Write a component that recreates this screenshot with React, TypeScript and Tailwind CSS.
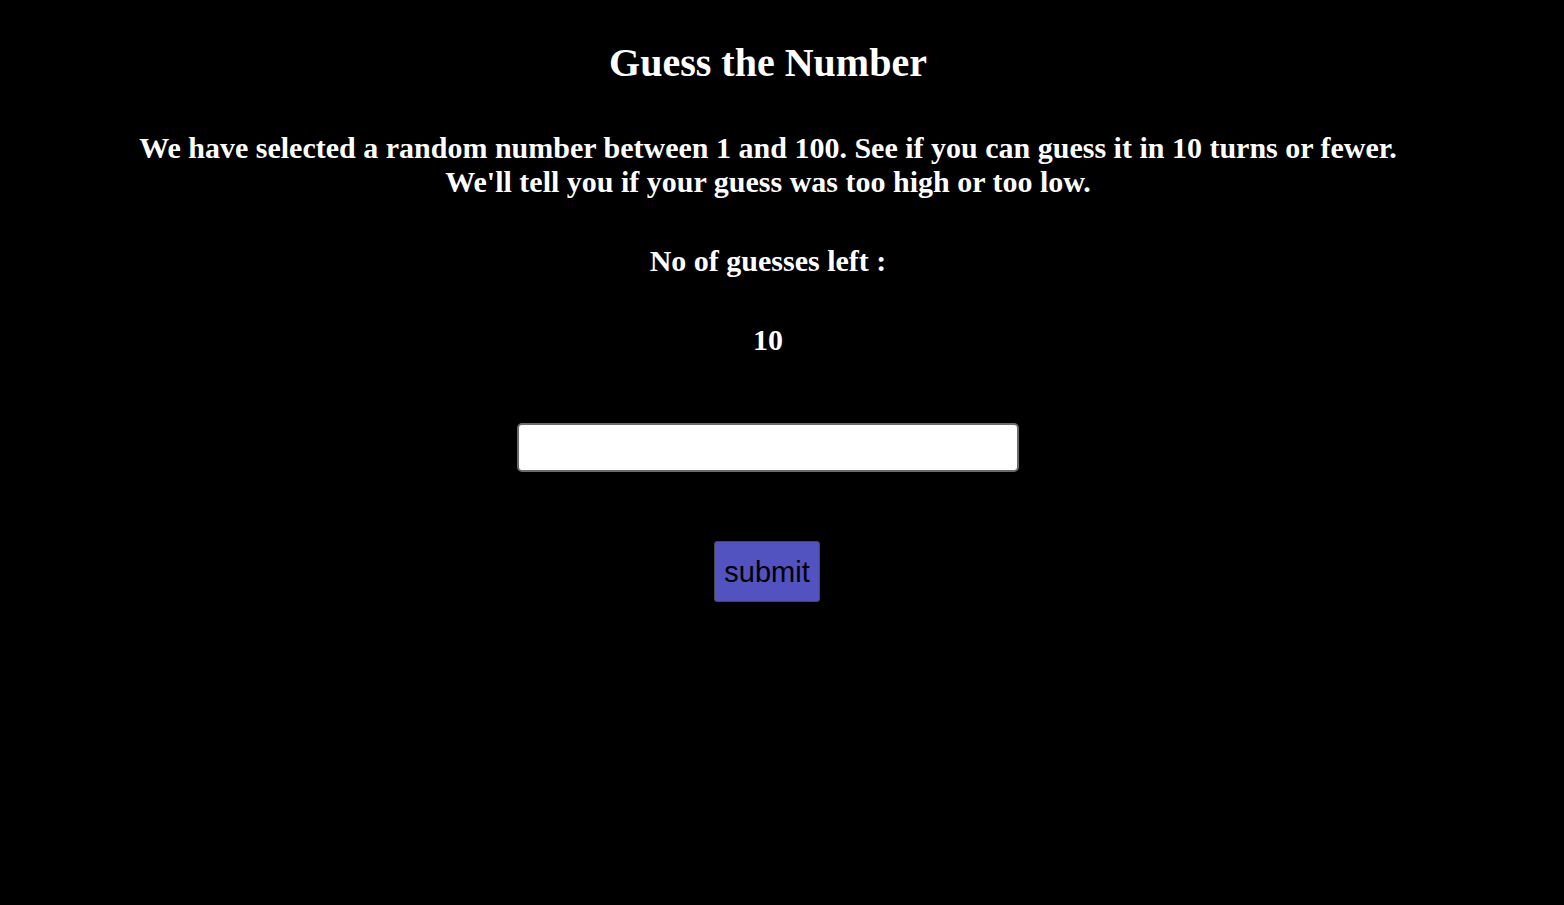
import { useState } from 'react';

export default function App() {
  const [guess, setGuess] = useState('');
  const [left, setLeft] = useState(10);

  return (
    <div className="min-h-[905px] w-full bg-black text-white font-['Liberation_Serif',serif]">
      <div className="w-[1536px] flex flex-col items-center text-center">
        <h1 className="mt-[40px] text-[40px] leading-[46px] font-bold">Guess the Number</h1>

        <p className="mt-[45px] text-[30px] leading-[34px] font-bold">
          We have selected a random number between 1 and 100. See if you can guess it in 10 turns or fewer.
          <br />
          We'll tell you if your guess was too high or too low.
        </p>

        <h2 className="mt-[45px] text-[30px] leading-[34px] font-bold">No of guesses left :</h2>
        <h2 className="mt-[45px] text-[30px] leading-[34px] font-bold">{left}</h2>

        <input
          type="text"
          value={guess}
          onChange={(e) => setGuess(e.target.value)}
          className="mt-[66px] w-[502px] h-[49px] bg-white text-black rounded-[5px] border-2 border-[#6b6b6b] px-2 text-[24px] outline-none"
        />

        <button
          onClick={() => left > 0 && setLeft(left - 1)}
          className="mt-[69px] mr-[2px] w-[106px] h-[61px] pt-[2px] bg-[#5252c0] text-black rounded-[3px] border border-[#4a4a4a] text-[29px] font-['Liberation_Sans',sans-serif]"
        >
          submit
        </button>
      </div>
    </div>
  );
}
